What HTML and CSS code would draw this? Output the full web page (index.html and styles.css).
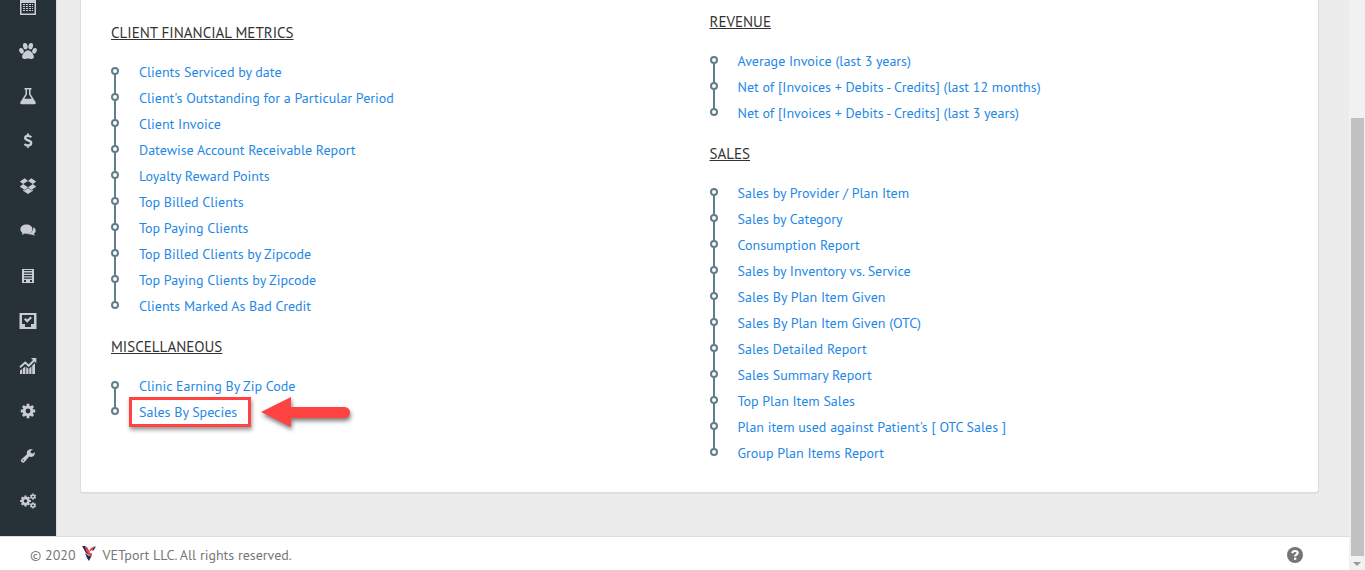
FILE: index.html
```html
<!DOCTYPE html>
<html lang="en">
<head>
<meta charset="utf-8">
<title>VETport - Reports</title>
<link rel="stylesheet" href="styles.css">
</head>
<body>
<div class="page">
    <div class="main">
        <nav class="sidebar">
            <a href="#" aria-label="Calendar"><svg viewBox="0 0 18 18"><path fill-rule="evenodd" d="M1 2h3V0h2v2h6V0h2v2h3v16H1zM2.500 6v10.500h13V6z"/><path d="M4 7h2v1H4zm3 0h2v1H7zm3 0h2v1h-2zm3 0h1v1h-1zM4 9h2v1H4zm3 0h2v1H7zm3 0h2v1h-2zm3 0h1v1h-1zM4 11h2v1H4zm3 0h2v1H7zm3 0h2v1h-2zm3 0h1v1h-1zM4 13h2v1H4zm3 0h2v1H7zm3 0h2v1h-2zm3 0h1v1h-1z"/></svg></a>
            <a href="#" aria-label="Patients"><svg viewBox="0 0 18 18"><ellipse cx="6.3" cy="4.2" rx="2.3" ry="3.2" transform="rotate(-10 6.3 4.2)"/><ellipse cx="11.7" cy="4.2" rx="2.3" ry="3.2" transform="rotate(10 11.7 4.2)"/><ellipse cx="2.500" cy="8.800" rx="2.200" ry="2.900" transform="rotate(-22 2.500 8.800)"/><ellipse cx="15.500" cy="8.800" rx="2.200" ry="2.900" transform="rotate(22 15.500 8.800)"/><path d="M9 8.200c2.800 0 5.900 4.300 5.900 6.600 0 1.800-1.300 2.300-2.700 2.300-1.200 0-2-.7-3.200-.7s-2 .7-3.200.7c-1.400 0-2.700-.5-2.700-2.300C3.100 12.500 6.200 8.200 9 8.200z"/></svg></a>
            <a href="#" aria-label="Lab"><svg viewBox="0 0 18 18"><path fill-rule="evenodd" d="M5.500 1h7v1.500h-1V7l5 8c.8 1.200.2 2.200-1.300 2.200H2.800C1.300 17.200.7 16.200 1.500 15l5-8V2.500h-1zM8 2.500v5L5.300 11.800h7.400L10 7.500v-5z"/></svg></a>
            <a href="#" aria-label="Billing"><svg viewBox="0 0 18 18"><path fill="none" stroke="currentColor" stroke-width="2.300" d="M12.300 5.300C11.300 4.300 10.200 3.800 8.900 3.800 7.300 3.800 6.200 4.600 6.200 5.800c0 3.200 6 2 6 5.300 0 1.500-1.200 2.400-3.100 2.400-1.500 0-2.700-.6-3.600-1.600M9 1.600v2.500M9 13.100v2.700"/></svg></a>
            <a href="#" aria-label="Inventory"><svg viewBox="0 0 18 18"><path d="M5.800 1.300L9 3.900 4.100 7 .8 4.400zM12.200 1.300L9 3.900 13.900 7l3.300-2.600zM.8 9.800L4.100 7.100 9 10.200l-3.200 2.700zM17.200 9.800l-3.300-2.700L9 10.200l3.200 2.700zM9 10.900l3.300 2.700 1.600-1v1.200L9 17l-4.900-3.200v-1.200l1.600 1z"/></svg></a>
            <a href="#" aria-label="Messages"><svg viewBox="0 0 18 18"><path d="M7.500 2.500C10.800 2.500 13.400 4.500 13.400 7.200s-2.600 4.600-5.900 4.600c-.6 0-1.100 0-1.600-.2-.9.700-2 1.200-3.400 1.300.6-.5 1-1.200 1.100-2C2.100 10 1.400 8.700 1.400 7.200 1.400 4.500 4.200 2.500 7.500 2.500z"/><path d="M14.300 5.300c1.500.7 2.400 1.900 2.400 3.300 0 1.300-.6 2.300-1.700 3 .1.900.5 1.500 1.100 2-1.300-.1-2.300-.5-3.200-1.200-1.900.3-3.600 0-4.800-.7 3.800-.1 6.500-2.800 6.200-6.400z"/></svg></a>
            <a href="#" aria-label="Clinic"><svg viewBox="0 0 18 18"><path fill-rule="evenodd" d="M3 2h12v14H3zM5 3v1h8V3zM5 5.500v1.200h8V5.500zM5 8v1.200h8V8zM5 10.500v1.200h8v-1.200zM5 13v2h2v-2zM11 13v2h2v-2z"/></svg></a>
            <a href="#" aria-label="Tasks"><svg viewBox="0 0 18 18"><path fill-rule="evenodd" d="M.500 1h17v16H.5zM3 3v9h3v3h6v-3h3V3z"/><path d="M5 7.500l1.500-1.500L8.200 7.500 11.500 4.500 13 6l-4.800 4.800z"/></svg></a>
            <a href="#" aria-label="Reports"><svg viewBox="0 0 18 18"><path d="M1 13.500l2.300-1.700V17H1zM4 11.200l2.400-1.800V17H4zM7.200 10l2.300 1.800V17H7.200zM10.200 11.600l2.300-2.200V17h-2.300zM13.200 8.700L16 6.100V17h-2.800z"/><path fill="none" stroke="currentColor" stroke-width="2" d="M1 10.300l5.200-4.700 3.500 3.200 6-6"/><path d="M12 1h5.300v5.200z"/></svg></a>
            <a href="#" aria-label="Settings"><svg viewBox="0 0 18 18"><circle cx="9" cy="9" r="3.900" fill="none" stroke="currentColor" stroke-width="3"/><path fill="none" stroke="currentColor" stroke-width="2.800" d="M9 1.800v2.500M9 13.700v2.500M1.800 9h2.500M13.700 9h2.500M3.900 3.900l1.800 1.800M12.300 12.300l1.800 1.800M3.900 14.100l1.800-1.800M12.300 5.700l1.800-1.800"/></svg></a>
            <a href="#" aria-label="Tools"><svg viewBox="0 0 18 18"><path fill-rule="evenodd" d="M13.900 2.500L11.600 3.900v1.900l1.700 1 2.500-1.500c.5 2.600-1.500 4.700-3.700 4.700-.7 0-1.300-.1-1.800-.4L5.500 15c-.9.900-1.900.9-2.600.2l-.5-.5c-.7-.7-.7-1.700.1-2.500l5.500-5C7.100 4.200 9.500 1.300 13.900 2.500zM4.200 12.600a.7.7 0 100 1.400.7.7 0 000-1.400z"/></svg></a>
            <a href="#" aria-label="Administration"><svg viewBox="0 0 18 18"><g fill="none" stroke="currentColor"><circle cx="6.500" cy="9" r="3" stroke-width="2.400"/><path stroke-width="2.200" d="M6.500 3.600v2M6.500 12.400v2M1.100 9h2M9.900 9h2M2.700 5.200l1.400 1.400M8.900 11.400l1.400 1.400M2.700 12.800l1.400-1.400M8.900 6.600l1.400-1.400"/><circle cx="14" cy="4.600" r="1.700" stroke-width="1.500"/><circle cx="14" cy="13.400" r="1.700" stroke-width="1.500"/><path stroke-width="1.500" d="M14 1.500v1.200M14 6.500v1.200M11.300 3.100l1 .6M15.700 5.500l1 .6M16.700 3.100l-1 .6M12.300 5.500l-1 .6M14 10.300v1.200M14 15.300v1.200M11.300 11.900l1 .6M15.700 14.300l1 .6M16.700 11.900l-1 .6M12.300 14.300l-1 .6"/></g></svg></a>
        </nav>
        <div class="content">
            <div class="card">
                <div class="column column-left">
                    <h6>CLIENT FINANCIAL METRICS</h6>
                    <ul class="timeline">
                        <li><a href="#">Clients Serviced by date</a></li>
                        <li><a href="#">Client's Outstanding for a Particular Period</a></li>
                        <li><a href="#">Client Invoice</a></li>
                        <li><a href="#">Datewise Account Receivable Report</a></li>
                        <li><a href="#">Loyalty Reward Points</a></li>
                        <li><a href="#">Top Billed Clients</a></li>
                        <li><a href="#">Top Paying Clients</a></li>
                        <li><a href="#">Top Billed Clients by Zipcode</a></li>
                        <li><a href="#">Top Paying Clients by Zipcode</a></li>
                        <li><a href="#">Clients Marked As Bad Credit</a></li>
                    </ul>
                    <h6>MISCELLANEOUS</h6>
                    <ul class="timeline">
                        <li><a href="#">Clinic Earning By Zip Code</a></li>
                        <li><a href="#" class="marked">Sales By Species</a><svg class="arrow" viewBox="0 0 90 32"><path d="M0 16L30 1v10h53.500a5.500 5.500 0 010 11H30v9z"/></svg></li>
                    </ul>
                </div>
                <div class="column">
                    <h6>REVENUE</h6>
                    <ul class="timeline">
                        <li><a href="#">Average Invoice (last 3 years)</a></li>
                        <li><a href="#">Net of [Invoices + Debits - Credits] (last 12 months)</a></li>
                        <li><a href="#">Net of [Invoices + Debits - Credits] (last 3 years)</a></li>
                    </ul>
                    <h6>SALES</h6>
                    <ul class="timeline">
                        <li><a href="#">Sales by Provider / Plan Item</a></li>
                        <li><a href="#">Sales by Category</a></li>
                        <li><a href="#">Consumption Report</a></li>
                        <li><a href="#">Sales by Inventory vs. Service</a></li>
                        <li><a href="#">Sales By Plan Item Given</a></li>
                        <li><a href="#">Sales By Plan Item Given (OTC)</a></li>
                        <li><a href="#">Sales Detailed Report</a></li>
                        <li><a href="#">Sales Summary Report</a></li>
                        <li><a href="#">Top Plan Item Sales</a></li>
                        <li><a href="#">Plan item used against Patient's [ OTC Sales ]</a></li>
                        <li><a href="#">Group Plan Items Report</a></li>
                    </ul>
                </div>
            </div>
        </div>
    </div>
    <footer class="footer">
        <span>© 2020</span>
        <svg class="logo" viewBox="0 0 14 16"><path fill="#232c54" d="M0 1h3l3 5 1 4-3-2zM11 3l3-2-2 4-2 1zM3 8l4 3 3-3-1 4-2 4-2-3z"/><path fill="#e8404c" d="M3 1l3 2 1 3 2-3 4-2-3 4-3 2 3 2-1 3-2-2-3-4z"/></svg>
        <span>VETport LLC. All rights reserved.</span>
        <a href="#" class="help" aria-label="Help"><svg viewBox="0 0 16 16"><circle cx="8" cy="8" r="8"/><path fill="none" stroke="#fff" stroke-width="2.200" d="M5.200 6.200C5.500 4.600 6.500 4 8 4s2.700.7 2.700 2c0 1.700-2.600 1.600-2.600 3.500"/><path fill="#fff" d="M7 10.700h2.300v2.100H7z"/></svg></a>
    </footer>
</div>
<div class="scrollbar">
    <div class="thumb"></div>
    <svg viewBox="0 0 16 14"><path d="M4 6h8l-4 4z"/></svg>
</div>
</body>
</html>
```
FILE: styles.css
```css
*, *::before, *::after {box-sizing:border-box}
body {margin:0;height:100vh;display:flex;overflow:hidden;font-family:"PT Sans","Noto Sans CJK SC","Noto Sans",sans-serif;font-size:14px;line-height:20px;color:#777;background:#ececec}
a {color:#1e88e5;text-decoration:none}
svg {display:block;fill:currentColor}

.page {flex:1;display:flex;flex-direction:column;min-width:0}
.main {flex:1;display:flex;min-height:0}

.sidebar {width:56px;flex:none;display:flex;flex-direction:column;justify-content:flex-end;padding-bottom:13px;background:#263238;overflow:hidden}
.sidebar a {flex:none;height:45px;display:flex;align-items:center;justify-content:center;color:#c9cdcf}
.sidebar svg {width:18px;height:18px}

.content {flex:1;display:flex;padding:0 30px 43px 23px;border-left:1px solid #ddd}
.card {flex:1;display:flex;padding:0 20px;background:#fff;border:1px solid #ddd;border-top:0;border-radius:0 0 3px 3px;box-shadow:0 1px 1px rgba(0,0,0,.05)}
.column {flex:1;padding:12px 10px 0}
.column-left {padding-top:23px}
h6 {margin:0 0 16px;font-size:15px;font-weight:normal;line-height:20px;color:#333;text-decoration:underline}

.timeline {list-style:none;margin:0 0 18px;padding:0}
.timeline li {position:relative;display:flex;align-items:center;height:26px;padding-left:28px}
.timeline li::before {content:"";position:absolute;left:3px;top:0;width:2px;height:100%;background:#607d8b}
.timeline li:first-child::before {top:50%;height:50%}
.timeline li:last-child::before {height:50%}
.timeline li::after {content:"";position:absolute;left:0;top:8px;width:8px;height:8px;border:2px solid #607d8b;border-radius:50%;background:#fff}

.marked {margin-left:-10px;padding:2px 11px 2px 7px;border:3px solid #ff4343;box-shadow:1px 3px 4px rgba(0,0,0,.4)}
.arrow {width:90px;height:32px;margin-left:10px;fill:#ff4343;filter:drop-shadow(1px 3px 2px rgba(0,0,0,.5))}

.footer {height:34px;flex:none;display:flex;align-items:center;padding:2px 46px 0 30px;background:#fff;border-top:1px solid #ddd}
.logo {width:14px;height:16px;margin:0 7px 4px 6px}
.help {margin-left:auto;color:#757575}
.help svg {width:16px;height:16px}

.scrollbar {width:16px;flex:none;display:flex;flex-direction:column;background:#f1f1f1;color:#999}
.thumb {flex:1;margin:118px 1px 0 2px;background:#c1c1c1}
.scrollbar svg {width:16px;height:14px}
```
